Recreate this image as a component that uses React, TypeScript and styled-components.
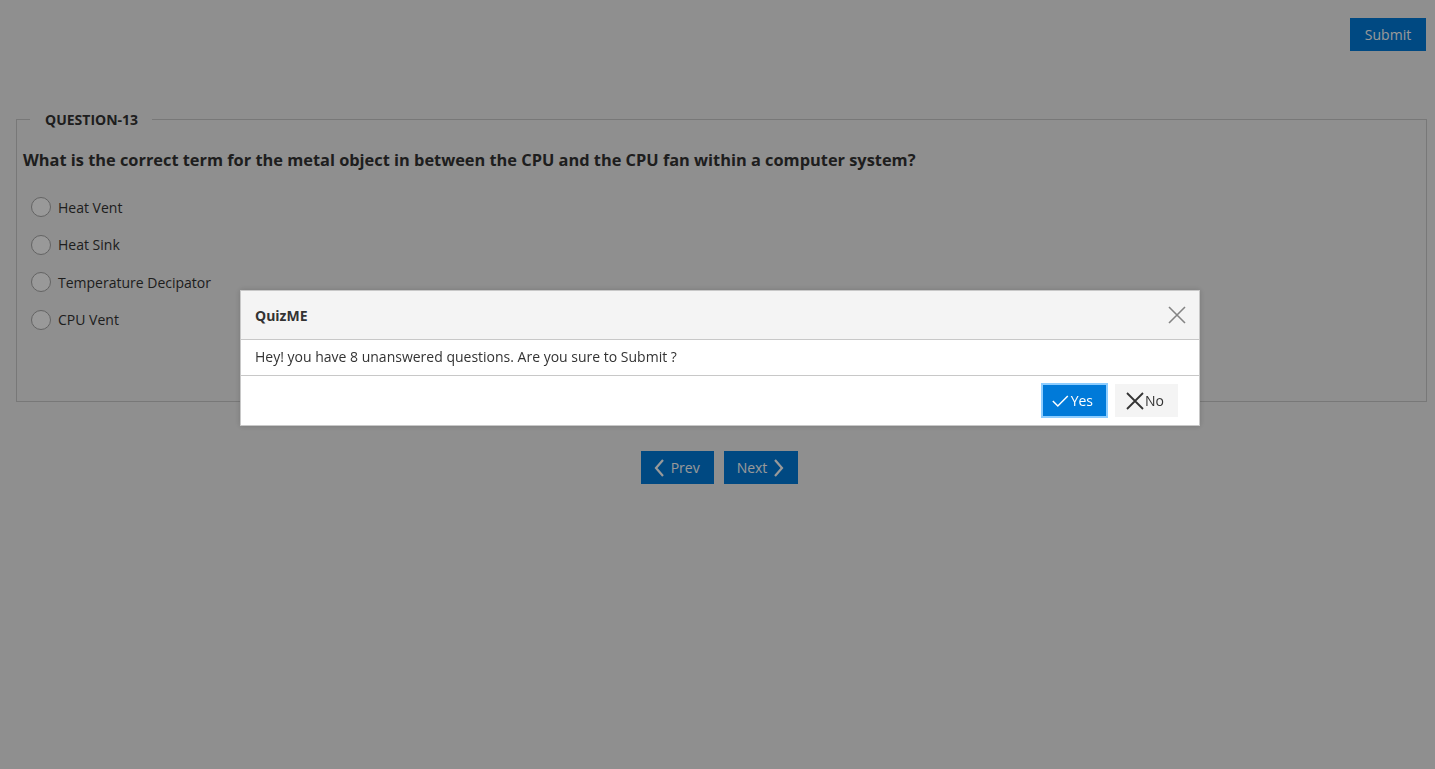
import React from "react";
import styled, { createGlobalStyle } from "styled-components";

const Global = createGlobalStyle`
  html, body { margin: 0; padding: 0; }
  body {
    background: #eeeeee;
    font-family: "Open Sans", "Liberation Sans", sans-serif;
    color: #333333;
    font-size: 14px;
  }
`;

const Page = styled.div`
  padding: 18px 8px 0 16px;
  min-height: 769px;
  box-sizing: border-box;
`;

const TopBar = styled.div`
  display: flex;
  justify-content: flex-end;
  height: 33px;
  padding-right: 1px;
`;

const PrimaryButton = styled.button`
  display: inline-flex;
  align-items: center;
  justify-content: center;
  gap: 4px;
  background: #007ad9;
  color: #ffffff;
  border: 1px solid #007ad9;
  font-family: inherit;
  font-size: 14px;
  height: 33px;
  padding: 0 14px;
  margin: 0;
  cursor: pointer;
`;

const SubmitButton = styled(PrimaryButton)`
  width: 76px;
`;

const Fieldset = styled.fieldset`
  margin: 59px 0 0 0;
  border: 1px solid #c8c8c8;
  padding: 0 6px 0 6px;
  height: 292px;
  box-sizing: border-box;
`;

const Legend = styled.legend`
  font-weight: 700;
  font-size: 14px;
  padding: 0 14px 0 15px;
  margin-left: 7px;
  color: #333;
`;

const Question = styled.h3`
  margin: 20px 0 26px 0;
  font-size: 16.38px;
  font-weight: 700;
`;

const Options = styled.div`
  display: flex;
  flex-direction: column;
  gap: 17.5px;
  padding-left: 8px;
`;

const Option = styled.label`
  display: flex;
  align-items: center;
  gap: 7px;
  font-size: 14px;
  height: 20px;
`;

const Radio = styled.span`
  width: 18px;
  height: 18px;
  border: 1px solid #a6a6a6;
  border-radius: 50%;
  background: #ffffff;
  flex: none;
`;

const Nav = styled.div`
  display: flex;
  justify-content: center;
  gap: 10px;
  margin-top: 49px;
  padding-right: 4px;
`;

const NavButton = styled(PrimaryButton)`
  padding: 0 13px 0 12px;
  gap: 6px;
`;

const Mask = styled.div`
  position: fixed;
  inset: 0;
  background: rgba(0, 0, 0, 0.4);
`;

const Dialog = styled.div`
  position: fixed;
  top: 290px;
  left: 240px;
  width: 960px;
  background: #ffffff;
  border: 1px solid #c8c8c8;
  box-sizing: border-box;
  box-shadow: 0 0 6px rgba(0, 0, 0, 0.16);
`;

const DialogHeader = styled.div`
  display: flex;
  align-items: center;
  justify-content: space-between;
  height: 48px;
  padding: 0 14px;
  background: #f4f4f4;
  border-bottom: 1px solid #c8c8c8;
`;

const DialogTitle = styled.span`
  font-weight: 700;
  font-size: 14px;
`;

const CloseButton = styled.button`
  background: none;
  border: none;
  padding: 0;
  margin: 0 -2px 0 0;
  display: flex;
  color: #848484;
  cursor: pointer;
`;

const DialogContent = styled.div`
  padding: 7px 14px;
  height: 36px;
  box-sizing: border-box;
  font-size: 14px;
  line-height: 19px;
  border-bottom: 1px solid #c8c8c8;
`;

const DialogFooter = styled.div`
  display: flex;
  justify-content: flex-end;
  align-items: center;
  gap: 9px;
  height: 49px;
  padding: 0 21px 0 0;
`;

const YesButton = styled(PrimaryButton)`
  height: 31px;
  padding: 0 12px 0 8px;
  gap: 2px;
  width: 63px;
  box-shadow: 0 0 0 2px #8dcdff;
`;

const NoButton = styled.button`
  display: inline-flex;
  align-items: center;
  gap: 1px;
  height: 33px;
  width: 63px;
  padding: 0 0 0 10px;
  background: #f4f4f4;
  border: 1px solid #f4f4f4;
  color: #333;
  font-family: inherit;
  font-size: 14px;
`;

const options = ["Heat Vent", "Heat Sink", "Temperature Decipator", "CPU Vent"];

export default function App() {
  return (
    <>
      <Global />
      <Page>
        <TopBar>
          <SubmitButton>Submit</SubmitButton>
        </TopBar>
        <Fieldset>
          <Legend>QUESTION-13</Legend>
          <Question>
            What is the correct term for the metal object in between the CPU and the CPU fan within a computer system?
          </Question>
          <Options>
            {options.map((o) => (
              <Option key={o}>
                <Radio />
                {o}
              </Option>
            ))}
          </Options>
        </Fieldset>
        <Nav>
          <NavButton>
            <svg width="11" height="18" viewBox="0 0 11 18" fill="none" stroke="#fff" strokeWidth="2.2">
              <path d="M9 1L2 9l7 8" />
            </svg>
            Prev
          </NavButton>
          <NavButton>
            Next
            <svg width="11" height="18" viewBox="0 0 11 18" fill="none" stroke="#fff" strokeWidth="2.2">
              <path d="M2 1l7 8-7 8" />
            </svg>
          </NavButton>
        </Nav>
      </Page>
      <Mask />
      <Dialog>
        <DialogHeader>
          <DialogTitle>QuizME</DialogTitle>
          <CloseButton aria-label="close">
            <svg width="20" height="20" viewBox="0 0 20 20" stroke="#848484" strokeWidth="1.6">
              <path d="M2 2l16 16M18 2L2 18" />
            </svg>
          </CloseButton>
        </DialogHeader>
        <DialogContent>Hey! you have 8 unanswered questions. Are you sure to Submit ?</DialogContent>
        <DialogFooter>
          <YesButton>
            <svg width="20" height="16" viewBox="0 0 20 16" fill="none" stroke="#fff" strokeWidth="1.8">
              <path d="M1 8l6 6L19 2" />
            </svg>
            Yes
          </YesButton>
          <NoButton>
            <svg width="18" height="18" viewBox="0 0 18 18" fill="none" stroke="#333" strokeWidth="1.8">
              <path d="M1 1l16 16M17 1L1 17" />
            </svg>
            No
          </NoButton>
        </DialogFooter>
      </Dialog>
    </>
  );
}
